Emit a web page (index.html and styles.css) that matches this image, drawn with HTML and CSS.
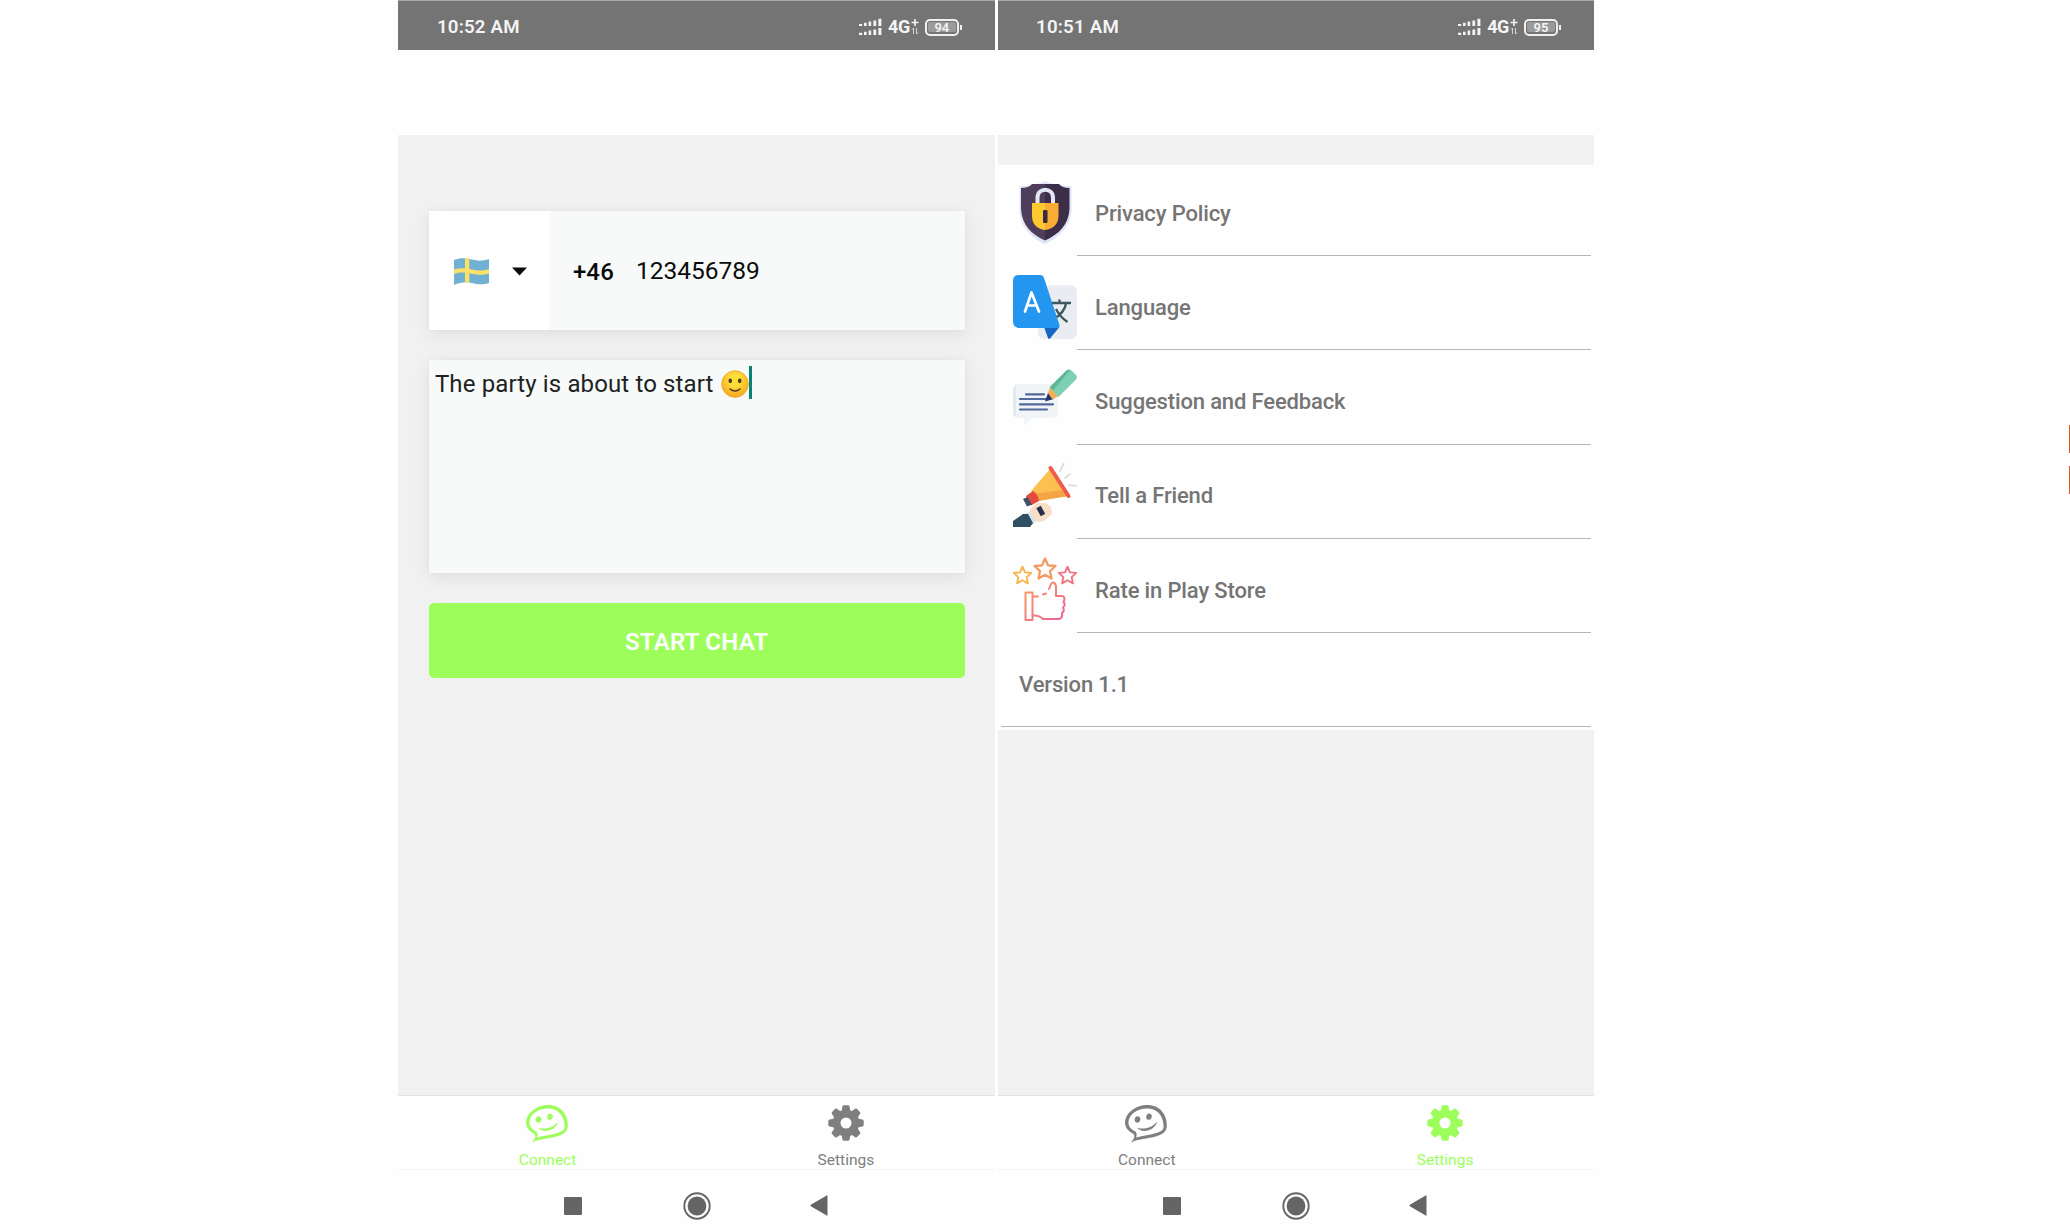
FILE: index.html
```html
<!DOCTYPE html>
<html lang="en">
<head>
<meta charset="utf-8">
<title>Start Chat</title>
<link rel="stylesheet" href="styles.css">
</head>
<body>
<svg class="defs" width="0" height="0">
  <defs>
    <symbol id="signal" viewBox="0 0 24 18">
      <path d="M0 8h3.200V6H0zM5 8h2.600V4.700H5zM9.600 8h2.600V3.600H9.600zM14.400 8h2.800V2.500h-2.800zM19.400 8h3V.8h-3zM0 17h3.200v-2.200H0zM5 17h2.600v-3.300H5zM9.600 17h2.600v-4.400H9.600zM14.400 17h2.800v-5.500h-2.800zM19.400 17h3V10h-3z"/>
    </symbol>
    <symbol id="data" viewBox="0 0 8 18">
      <path d="M4 1v7M.5 4.500h7" fill="none" stroke="currentColor" stroke-width="1.600"/>
      <path d="M2.500 16v-6L1 11.500M5.500 10v6L7 14.500" fill="none" stroke="currentColor" stroke-width="1" opacity=".75"/>
    </symbol>
    <symbol id="smile" viewBox="0 0 42 38">
      <path fill-rule="evenodd" d="M6 37.400C9 34 10.500 31.500 8.200 28.800C3 26.300 0 22 0 17.500C.5 7.500 11 0 22.500 0C34.500 0 42 9 41.800 20.500C41.800 27 37 29.500 31.500 31.300C22 34 13 34 6 37.400ZM11 32.500C18 30.500 25 30.500 32 27.800C36.500 26.200 39 25 38.600 20.500C38.100 10.500 32 3.400 22.500 3.400C12 3.400 3.700 9.500 3.400 17.500C3.400 21.500 6 24.500 10.500 26.500C12 28.500 12 30.500 11 32.500Z"/>
      <ellipse cx="12.500" cy="14.500" rx="2.800" ry="3.100" transform="rotate(15 12.500 14.500)"/>
      <ellipse cx="24" cy="11.700" rx="2.700" ry="3.100" transform="rotate(15 24 11.700)"/>
      <path d="M12 22.700C20 25 27 22.500 32.500 16.500C29.500 25.500 18 29 12 22.700Z"/>
    </symbol>
    <symbol id="gear" viewBox="-18 -18 36 36">
      <path id="tooth" d="M-4.600 -11L-3.500 -16.500Q-3.200 -17.700 -2 -17.700H2Q3.200 -17.700 3.500 -16.500L4.600 -11Z"/>
      <use href="#tooth" transform="rotate(45)"/><use href="#tooth" transform="rotate(90)"/><use href="#tooth" transform="rotate(135)"/><use href="#tooth" transform="rotate(180)"/><use href="#tooth" transform="rotate(225)"/><use href="#tooth" transform="rotate(270)"/><use href="#tooth" transform="rotate(315)"/>
      <circle r="9.400" fill="none" stroke="currentColor" stroke-width="7.800"/>
    </symbol>
    <symbol id="home" viewBox="0 0 28 28">
      <circle cx="14" cy="14" r="12.700" fill="none" stroke="currentColor" stroke-width="1.900"/>
      <circle cx="14" cy="14" r="9.400"/>
    </symbol>
    <symbol id="star" viewBox="0 0 24 24">
      <path d="M12 2L15 8.800L22.500 9.500L17 14.600L18.500 22L12 18.300L5.500 22L7 14.600L1.500 9.500L9 8.800Z" fill="none" stroke-width="2.300" stroke-linejoin="round"/>
    </symbol>
    <linearGradient id="warm" gradientUnits="userSpaceOnUse" x1="8" y1="12" x2="56" y2="60">
      <stop offset="0" stop-color="#f8b84e"/><stop offset=".45" stop-color="#f58a70"/><stop offset="1" stop-color="#ee5c9c"/>
    </linearGradient>
    <radialGradient id="face" cx=".5" cy=".35" r=".65">
      <stop offset=".3" stop-color="#fede3a"/><stop offset="1" stop-color="#f5a81f"/>
    </radialGradient>
  </defs>
</svg>

<main class="stage">
  <section class="phone">
    <header class="status">
      <span class="time">10:52 AM</span>
      <svg class="signal"><use href="#signal"/></svg>
      <span class="network">4G</span>
      <svg class="data"><use href="#data"/></svg>
      <span class="battery"><span class="level">94</span></span>
    </header>
    <div class="titlebar"></div>
    <div class="content form">
      <div class="card number-card">
        <div class="country">
          <svg class="flag" viewBox="0 0 35 27">
            <path fill="#6fb0d3" d="M0 2C6-.5 12-.2 18 1.500S29 3 35 1V25C29 27 24 26.500 18 25S6 24.500 0 27Z"/>
            <path fill="#fbe168" d="M11 .3L15.300 .8V25L11 24.600ZM0 11.500C6 9.500 12 10 18 11.500S29 13 35 11V15.500C29 17.500 24 17 18 15.700S6 14 0 16Z"/>
          </svg>
          <svg class="caret" viewBox="0 0 15 9"><path d="M0 .5H15L7.500 8.500Z"/></svg>
        </div>
        <span class="prefix">+46</span>
        <span class="number">123456789</span>
      </div>
      <div class="card message">
        <span class="message-text">The party is about to start</span>
        <svg class="emoji" viewBox="0 0 28 28">
          <circle cx="14" cy="14" r="13.300" fill="url(#face)" stroke="#eda52c" stroke-width=".8"/>
          <ellipse cx="9.300" cy="10.800" rx="1.800" ry="2.400" fill="#4d3a1c"/><ellipse cx="18.700" cy="10.800" rx="1.800" ry="2.400" fill="#4d3a1c"/>
          <path d="M9 19Q14 23 19 19" fill="none" stroke="#4d3a1c" stroke-width="1.600" stroke-linecap="round"/>
        </svg>
        <span class="cursor"></span>
      </div>
      <button class="start">START CHAT</button>
    </div>
    <nav class="tabs">
      <a class="tab active"><svg class="tab-smile"><use href="#smile"/></svg><span>Connect</span></a>
      <a class="tab"><svg class="tab-gear"><use href="#gear"/></svg><span>Settings</span></a>
    </nav>
    <footer class="system">
      <i class="recent"></i>
      <svg class="home"><use href="#home"/></svg>
      <svg class="back" viewBox="0 0 18 21"><path d="M17.500 .8V20.200Q17.500 21 16.700 20.500L.8 11.200Q0 10.500 .8 9.800L16.700 .500Q17.500 0 17.500 .8Z"/></svg>
    </footer>
  </section>

  <section class="phone">
    <header class="status">
      <span class="time">10:51 AM</span>
      <svg class="signal"><use href="#signal"/></svg>
      <span class="network">4G</span>
      <svg class="data"><use href="#data"/></svg>
      <span class="battery"><span class="level">95</span></span>
    </header>
    <div class="titlebar"></div>
    <div class="content settings">
      <ul class="list">
        <li class="row">
          <svg class="icon" viewBox="0 0 64 64">
            <path fill="#dfe4f7" d="M32 0C27 3 18 4 6.500 5.500V28C7 45 17 56 32 63C47 56 58 45 58.500 28V5.500C46 4 37 3 32 0Z"/>
            <path fill="#4f3d5c" d="M32 3H19Q16 7 8 7V28C9 44 18 53 32 59.500Z"/>
            <path fill="#3c2d48" d="M32 3H46Q49 7 56.500 7V28C55.500 44 46 53 32 59.500Z"/>
            <path d="M24.500 23V17C24.500 6 40 6 40 17V23" fill="none" stroke="#e3e6f5" stroke-width="4"/>
            <path fill="#fdc92e" d="M19 22H32V49C24 48 19 43 19 35Z"/><path fill="#f9ad35" d="M32 22H45.500V35C45.500 43 40 48 32 49Z"/>
            <rect x="30" y="29" width="4.500" height="13" rx="1" fill="#3d2b43"/>
          </svg>
          <span class="label">Privacy Policy</span>
        </li>
        <li class="row">
          <svg class="icon" viewBox="0 0 64 64">
            <rect x="25" y="10.500" width="39" height="53.500" rx="6" fill="#e9edf1"/>
            <path d="M39 28H58M46.500 24.500V28M53 28.500C52 36 46 41 40 44.500M43 34C46 40 50 44 54.500 47" fill="none" stroke="#3b585f" stroke-width="2.300"/>
            <path fill="#1665c0" d="M31 52H46.500L37 63.500Q36 64.500 35 63Z"/>
            <path fill="#2496f0" d="M6 0H27Q30 0 31 3L46.500 50Q47 53 44 53H7Q0 53 0 46V6Q0 0 6 0Z"/>
            <path d="M12 36.500L18.500 17.500L26 36.500M14 30.500H23.500" fill="none" stroke="#fff" stroke-width="2.700" stroke-linecap="round" stroke-linejoin="round"/>
          </svg>
          <span class="label">Language</span>
        </li>
        <li class="row">
          <svg class="icon" viewBox="0 0 64 64">
            <path fill="#f1f5f8" d="M6 15H39Q45 15 45 21V43Q45 49 39 49H20L11 57V49H6Q0 49 0 43V21Q0 15 6 15Z"/>
            <path fill="#e3eaef" d="M3 15.500Q0 17 0 22V43Q0 47 3 48Z"/>
            <path d="M13 25.300H31M7 30H34M7 35.300H40M7 40.500H34" stroke="#53689b" stroke-width="2.200" stroke-linecap="round"/>
            <path fill="#24346f" d="M32 32.500L35 24L41 30Z"/>
            <path fill="#f3b155" d="M35 24L37 18L45.500 27L39.500 30.500Z"/>
            <path fill="#7dd0b4" d="M37 18L53 2Q56-1 59 2L63 6Q65 8.500 62.500 11L45.500 28Z"/>
            <path fill="#5eb697" d="M37 18L53 2Q55 0 57 1L40 21.500Z"/>
          </svg>
          <span class="label">Suggestion and Feedback</span>
        </li>
        <li class="row">
          <svg class="icon" viewBox="0 0 64 64">
            <path d="M47 8L50.500 1M52 15L57 11M56 22L63 23" stroke="#dedbd6" stroke-width="1.700" stroke-linecap="round"/>
            <path fill="#fbc04f" d="M37 6L55 33L25 38L18 28Z"/>
            <path fill="#f4a545" d="M20 31L50 27L55 33L25 38Z"/>
            <path d="M37.500 5L55.500 33" stroke="#ee5b4a" stroke-width="4" stroke-linecap="round"/>
            <path fill="#e44a3f" d="M13 33L20 28Q25 31 26 38L18 42.500Z"/>
            <path fill="#3b5365" d="M10 36L14.500 34L19 41.500L14 43.500Z"/>
            <path fill="#f9dec7" d="M18 45L24 40H33L38 44L39 51L31 58L24 59L15 53Z"/>
            <path d="M25.500 44L30 52" stroke="#252e4b" stroke-width="5"/>
            <path fill="#d9e3ec" d="M12 50L17 49L23 58L20 62Z"/>
            <path fill="#2f4f63" d="M0 58L10 51L15 51L20 60L17 64H0Z"/>
          </svg>
          <span class="label">Tell a Friend</span>
        </li>
        <li class="row">
          <svg class="icon" viewBox="0 0 64 64">
            <use href="#star" x="-.5" y="8" width="20" height="20" stroke="#f7b44f"/>
            <use href="#star" x="20" y="-.5" width="24" height="24" stroke="#f39b64"/>
            <use href="#star" x="44.500" y="8" width="20" height="20" stroke="#f07482"/>
            <path d="M12.500 35.500H19.500V63H12.500ZM20 39.500H25M30 37.500L33 36.500M36 32L38 27Q41 23 43 29V39H49Q53 40 50.500 45Q53 48 50 50.500Q52 54 49 56Q50 62 45 62H30Q26 58 20 58.500" fill="none" stroke="url(#warm)" stroke-width="2" stroke-linecap="round" stroke-linejoin="round"/>
          </svg>
          <span class="label">Rate in Play Store</span>
        </li>
        <li class="row version"><span class="label">Version 1.1</span></li>
      </ul>
    </div>
    <nav class="tabs">
      <a class="tab"><svg class="tab-smile"><use href="#smile"/></svg><span>Connect</span></a>
      <a class="tab active"><svg class="tab-gear"><use href="#gear"/></svg><span>Settings</span></a>
    </nav>
    <footer class="system">
      <i class="recent"></i>
      <svg class="home"><use href="#home"/></svg>
      <svg class="back" viewBox="0 0 18 21"><path d="M17.500 .8V20.200Q17.500 21 16.700 20.500L.8 11.200Q0 10.500 .8 9.800L16.700 .500Q17.500 0 17.500 .8Z"/></svg>
    </footer>
  </section>

  <aside class="edge"><i></i><i></i></aside>
</main>
</body>
</html>
```
FILE: styles.css
```css
* { box-sizing: border-box; }
body { margin: 0; background: #fefefe; font-family: Roboto, "Liberation Sans", sans-serif; overflow: hidden; }
svg { display: block; fill: currentColor; flex: none; }
.defs { position: absolute; }
.stage { display: flex; gap: 2.5px; height: 1227px; padding-left: 398.400px; }
.phone { width: 596.700px; flex: none; display: flex; flex-direction: column; background: #fefefe; }

.status { height: 50px; flex: none; display: flex; align-items: center; padding: 3px 32px 0 38.500px; background: #747474; border-top: 1px solid #a9a9a9; color: #f4f4f4; }
.time { flex: 1; font-size: 18.700px; font-weight: 600; line-height: 22px; letter-spacing: .2px; }
.signal { width: 24px; height: 18px; margin-right: 5px; }
.network { width: 22px; font-size: 18px; font-weight: 700; line-height: 22px; letter-spacing: -.5px; }
.data { width: 8px; height: 18px; margin: 0 5.500px 0 1px; }
.battery { position: relative; width: 34.500px; height: 17px; padding: 1.500px; margin-right: 4px; border: 2px solid #f0f0f0; border-radius: 5px; }
.battery::after { content: ""; position: absolute; right: -5px; top: 4px; width: 2px; height: 5px; background: #f0f0f0; }
.level { display: block; height: 10px; border-radius: 2px; background: #9a9a9a; font-size: 13px; font-weight: 600; line-height: 11px; text-align: center; }

.titlebar { height: 85px; flex: none; }
.content { height: 960px; flex: none; background: #f1f1f1; }
.form { padding: 76px 30.500px 0; display: flex; flex-direction: column; }
.card { background: #f8faf9; box-shadow: 0 4px 16px rgba(0, 0, 0, .08), 0 0 3px rgba(0, 0, 0, .04); }
.number-card { display: flex; align-items: center; height: 119px; margin-bottom: 30px; color: #0a0a0a; }
.country { display: flex; align-items: center; gap: 23px; width: 120px; height: 100%; padding: 2px 0 0 25px; background: #fff; }
.flag { width: 35px; height: 27px; }
.caret { width: 15px; height: 9px; }
.prefix { width: 63px; margin-left: 24px; padding-top: 2px; font-size: 24px; font-weight: 500; letter-spacing: .15px; }
.number { font-size: 24.500px; }
.message { display: flex; align-items: flex-start; height: 213px; margin-bottom: 30px; padding: 6px; color: #202222; }
.message-text { padding-top: 1px; font-size: 24px; line-height: 34px; letter-spacing: .13px; }
.emoji { width: 28px; height: 28px; margin: 4px 0 0 7px; }
.cursor { width: 3.500px; height: 33px; background: #078273; }
.start { height: 75px; padding: 3px 0 0; border: 0; border-radius: 5px; background: #9dfe5b; color: #fff; font: 600 24px Roboto, sans-serif; letter-spacing: .25px; }

.settings { padding-top: 30px; }
.list { height: 565px; margin: 0; padding: 0 3px 0 15px; list-style: none; background: #fefefe; }
.row { display: flex; height: 94.300px; padding-top: 18.600px; font-size: 22px; font-weight: 500; letter-spacing: -.15px; color: #757575; }
.row:first-child { height: 91px; padding-top: 15.600px; }
.icon { width: 64px; height: 64px; }
.label { flex: 1; height: 100%; padding: 18.300px 0 0 18.500px; line-height: 30px; border-bottom: 1.400px solid #b5b5b5; }
.version { margin-left: -12px; }

.tabs { display: flex; height: 75px; flex: none; border-top: 1.500px solid #e2e2e2; border-bottom: 1.500px solid #f3f3f3; }
.tab { flex: 1; display: flex; flex-direction: column; align-items: center; gap: 7px; padding-top: 8.500px; color: #7f7f7f; font-size: 15.500px; line-height: 20px; }
.active { color: #9dfe5b; }
.tab-smile { width: 42px; height: 38px; margin-right: 2px; }
.tab-gear { width: 36px; height: 36px; margin-bottom: 2px; }

.system { display: flex; align-items: center; flex: 1; padding: 14px 0 0 165.300px; color: #656565; }
.recent { width: 18px; height: 18px; border-radius: 1px; background: #656565; }
.home { width: 28px; height: 28px; margin: 0 99px 0 101px; }
.back { width: 18px; height: 21px; }

.edge { display: flex; flex-direction: column; gap: 13px; width: 1px; margin-left: auto; padding-top: 425px; }
.edge i { height: 28px; background: #dc5a20; }
```
